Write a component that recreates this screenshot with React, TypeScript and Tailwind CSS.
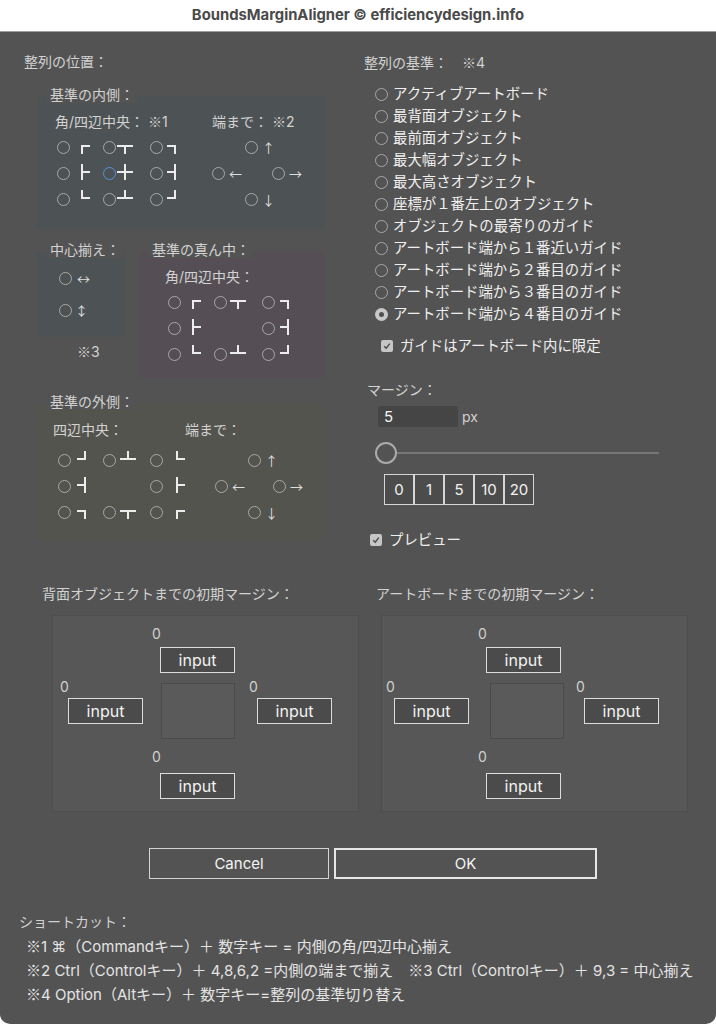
import React from "react";

function T({ s }: { s: string }) {
  const parts = s.split("※");
  return (
    <>
      {parts.map((p, i) => (
        <React.Fragment key={i}>
          {i > 0 && <span className="font-['Noto_Sans_CJK_JP',sans-serif]">※</span>}
          {p}
        </React.Fragment>
      ))}
    </>
  );
}

function Radio({ blue }: { blue?: boolean }) {
  return (
    <span
      className={
        blue
          ? "block w-[13px] h-[13px] shrink-0 rounded-full border-[1.5px] border-[#4f92db]"
          : "block w-[13px] h-[13px] shrink-0 rounded-full border-[1.5px] border-[#a8a8a8]"
      }
    />
  );
}

function RadioOn() {
  return (
    <span className="flex w-[13px] h-[13px] shrink-0 items-center justify-center rounded-full bg-[#c8c8c8]">
      <span className="block w-[5px] h-[5px] rounded-full bg-[#4f4f4f]" />
    </span>
  );
}

function Check() {
  return (
    <span className="flex w-[12px] h-[12px] shrink-0 items-center justify-center rounded-[2px] bg-[#c6c6c6]">
      <svg width="8" height="8" viewBox="0 0 8 8">
        <path d="M1.2 4.2 L3.2 6.2 L6.8 1.6" fill="none" stroke="#4a4a4a" strokeWidth="1.4" />
      </svg>
    </span>
  );
}

function G({ a, ml }: { a: string; ml: string }) {
  return (
    <svg width="16" height="16" viewBox="0 0 16 16" className={"shrink-0 mb-[3px] " + ml} fill="#ececec">
      {a.includes("l") && <rect x="0" y="7" width="9" height="2" />}
      {a.includes("r") && <rect x="7" y="7" width="9" height="2" />}
      {a.includes("u") && <rect x="7" y="0" width="2" height="9" />}
      {a.includes("d") && <rect x="7" y="7" width="2" height="9" />}
    </svg>
  );
}

function GCell({ a, ml, w, blue }: { a: string; ml: string; w: string; blue?: boolean }) {
  return (
    <div className={"flex items-center shrink-0 " + w}>
      <Radio blue={blue} />
      <G a={a} ml={ml} />
    </div>
  );
}

function Arrow({ ch, ml }: { ch: string; ml: string }) {
  return (
    <span className={"font-['Noto_Sans_CJK_JP',sans-serif] text-[13px] leading-none text-[#dedede] " + ml}>{ch}</span>
  );
}

function ACell({ ch, w }: { ch: string; w: string }) {
  return (
    <div className={"flex items-center shrink-0 " + w}>
      <Radio />
      <Arrow ch={ch} ml="ml-[4px]" />
    </div>
  );
}

function Empty({ w }: { w: string }) {
  return <div className={"shrink-0 " + w} />;
}

function Legend({ children }: { children: React.ReactNode }) {
  return (
    <div className="relative z-10 ml-[10px] w-fit px-[3px] bg-[#535353] text-[14px] leading-[16px] text-[#d2d2d2] whitespace-nowrap">
      {children}
    </div>
  );
}

const listItems = [
  "アクティブアートボード",
  "最背面オブジェクト",
  "最前面オブジェクト",
  "最大幅オブジェクト",
  "最大高さオブジェクト",
  "座標が１番左上のオブジェクト",
  "オブジェクトの最寄りのガイド",
  "アートボード端から１番近いガイド",
  "アートボード端から２番目のガイド",
  "アートボード端から３番目のガイド",
  "アートボード端から４番目のガイド",
];

function InputBox() {
  return (
    <div className="ml-[8px] flex w-[75px] h-[26px] items-center justify-center border-[1.5px] border-[#dcdcdc] bg-[#4b4b4b] text-[16px] leading-none text-[#f2f2f2]">
      input
    </div>
  );
}

function Zero() {
  return <div className="text-[14px] leading-[16px] text-[#d0d0d0]">0</div>;
}

function MarginPanel({ right }: { right?: boolean }) {
  return (
    <div className="w-[307px] h-[197px] mt-[11px] bg-[#575757] border border-[#4e4e4e] pt-[10px]">
      <div className={right ? "ml-[96px] flex flex-col" : "ml-[99px] flex flex-col"}>
        <Zero />
        <div className="mt-[5px]">
          <InputBox />
        </div>
      </div>
      <div className="mt-[6px] flex items-start">
        <div className={right ? "ml-[4px] flex flex-col" : "ml-[7px] flex flex-col"}>
          <Zero />
          <div className="mt-[3px]">
            <InputBox />
          </div>
        </div>
        <div className={right ? "ml-[21px] mt-[4px] w-[74px] h-[56px] bg-[#5a5a5a] border border-[#4a4a4a]" : "ml-[18px] mt-[4px] w-[74px] h-[56px] bg-[#5a5a5a] border border-[#4a4a4a]"} />
        <div className={right ? "ml-[12px] flex flex-col" : "ml-[14px] flex flex-col"}>
          <Zero />
          <div className="mt-[3px]">
            <InputBox />
          </div>
        </div>
      </div>
      <div className={right ? "ml-[96px] mt-[10px] flex flex-col" : "ml-[99px] mt-[10px] flex flex-col"}>
        <Zero />
        <div className="mt-[8px]">
          <InputBox />
        </div>
      </div>
    </div>
  );
}

export default function App() {
  return (
    <div className="w-[716px] h-[1024px] bg-white font-['Inter','Noto_Sans_CJK_JP',sans-serif] overflow-hidden">
      {/* title bar */}
      <div className="h-[32px] flex items-center justify-center border-b border-[#9c9c9c] bg-white">
        <span className="text-[14.8px] font-bold text-[#4a4a4a]">
          BoundsMarginAligner © efficiencydesign.info
        </span>
      </div>

      {/* body */}
      <div className="h-[992px] bg-[#535353] rounded-b-[10px]">
        {/* top section */}
        <div className="h-[520px] flex">
          {/* left column */}
          <div className="w-[340px] pl-[24px] pt-[20px]">
            <div className="text-[14px] leading-[20px] text-[#d2d2d2]">整列の位置：</div>

            {/* inner panel */}
            <div className="ml-[13px] w-[288px] mt-[15px]">
              <Legend>基準の内側：</Legend>
              <div className="-mt-[7px] h-[133px] bg-[#4d5354] pt-[17px]">
                <div className="flex text-[14px] leading-[16px] text-[#d2d2d2] whitespace-nowrap">
                  <span className="ml-[18px] w-[157px]"><T s="角/四辺中央： ※1" /></span>
                  <span><T s="端まで： ※2" /></span>
                </div>
                <div className="mt-[4px] pl-[20px]">
                  <div className="flex h-[26px] items-center">
                    <GCell a="rd" ml="ml-[4px]" w="w-[46px]" />
                    <GCell a="lrd" ml="ml-[1px]" w="w-[47px]" />
                    <GCell a="ld" ml="ml-[4px]" w="w-[62px]" />
                    <Empty w="w-[33px]" />
                    <ACell ch="↑" w="w-[27px]" />
                  </div>
                  <div className="flex h-[26px] items-center">
                    <GCell a="udr" ml="ml-[4px]" w="w-[46px]" />
                    <GCell a="udlr" ml="ml-[1px]" w="w-[47px]" blue />
                    <GCell a="udl" ml="ml-[4px]" w="w-[62px]" />
                    <ACell ch="←" w="w-[33px]" />
                    <Empty w="w-[27px]" />
                    <ACell ch="→" w="w-[30px]" />
                  </div>
                  <div className="flex h-[26px] items-center">
                    <GCell a="ur" ml="ml-[4px]" w="w-[46px]" />
                    <GCell a="lru" ml="ml-[1px]" w="w-[47px]" />
                    <GCell a="ul" ml="ml-[4px]" w="w-[62px]" />
                    <Empty w="w-[33px]" />
                    <ACell ch="↓" w="w-[27px]" />
                  </div>
                </div>
              </div>
            </div>

            {/* center + middle */}
            <div className="ml-[13px] mt-[13px] flex items-start">
              <div className="w-[88px]">
                <Legend>中心揃え：</Legend>
                <div className="-mt-[6px] h-[85px] bg-[#4d5354] pt-[13px] pl-[22px] flex flex-col gap-[6px]">
                  <div className="flex h-[26px] items-center">
                    <Radio />
                    <Arrow ch="↔" ml="ml-[5px]" />
                  </div>
                  <div className="flex h-[26px] items-center">
                    <Radio />
                    <Arrow ch="↕" ml="ml-[3px]" />
                  </div>
                </div>
                <div className="mt-[6px] ml-[40px] text-[14px] leading-[16px] text-[#d2d2d2]"><T s="※3" /></div>
              </div>
              <div className="ml-[14px] w-[186px]">
                <Legend>基準の真ん中：</Legend>
                <div className="-mt-[6px] h-[126px] bg-[#554f55] pt-[17px]">
                  <div className="ml-[26px] text-[14px] leading-[16px] text-[#d2d2d2]">角/四辺中央：</div>
                  <div className="mt-[4px] pl-[29px]">
                    <div className="flex h-[26px] items-center">
                      <GCell a="rd" ml="ml-[4px]" w="w-[46px]" />
                      <GCell a="lrd" ml="ml-[3px]" w="w-[48px]" />
                      <GCell a="ld" ml="ml-[5px]" w="w-[40px]" />
                    </div>
                    <div className="flex h-[26px] items-center">
                      <GCell a="udr" ml="ml-[4px]" w="w-[46px]" />
                      <Empty w="w-[48px]" />
                      <GCell a="udl" ml="ml-[5px]" w="w-[40px]" />
                    </div>
                    <div className="flex h-[26px] items-center">
                      <GCell a="ur" ml="ml-[4px]" w="w-[46px]" />
                      <GCell a="lru" ml="ml-[3px]" w="w-[48px]" />
                      <GCell a="ul" ml="ml-[5px]" w="w-[40px]" />
                    </div>
                  </div>
                </div>
              </div>
            </div>

            {/* outer panel */}
            <div className="ml-[13px] w-[286px] mt-[16px]">
              <Legend>基準の外側：</Legend>
              <div className="-mt-[7px] h-[137px] bg-[#54544e] pt-[19px]">
                <div className="flex text-[14px] leading-[16px] text-[#d2d2d2] whitespace-nowrap">
                  <span className="ml-[16px] w-[132px]">四辺中央：</span>
                  <span>端まで：</span>
                </div>
                <div className="mt-[9px] pl-[21px]">
                  <div className="flex h-[26px] items-center">
                    <GCell a="ul" ml="ml-[6px]" w="w-[45px]" />
                    <GCell a="lru" ml="ml-[4px]" w="w-[47px]" />
                    <GCell a="ur" ml="ml-[6px]" w="w-[65px]" />
                    <Empty w="w-[33px]" />
                    <ACell ch="↑" w="w-[25px]" />
                  </div>
                  <div className="flex h-[26px] items-center">
                    <GCell a="udl" ml="ml-[6px]" w="w-[45px]" />
                    <Empty w="w-[47px]" />
                    <GCell a="udr" ml="ml-[6px]" w="w-[65px]" />
                    <ACell ch="←" w="w-[33px]" />
                    <Empty w="w-[25px]" />
                    <ACell ch="→" w="w-[30px]" />
                  </div>
                  <div className="flex h-[26px] items-center">
                    <GCell a="ld" ml="ml-[6px]" w="w-[45px]" />
                    <GCell a="lrd" ml="ml-[4px]" w="w-[47px]" />
                    <GCell a="rd" ml="ml-[6px]" w="w-[65px]" />
                    <Empty w="w-[33px]" />
                    <ACell ch="↓" w="w-[25px]" />
                  </div>
                </div>
              </div>
            </div>
          </div>

          {/* right column */}
          <div className="pl-[24px] pt-[20px] flex-1">
            <div className="text-[14px] leading-[20px] text-[#d2d2d2] whitespace-nowrap"><T s="整列の基準：　※4" /></div>
            <div className="mt-[10px] pl-[11px]">
              {listItems.map((t, i) => (
                <div key={i} className="flex h-[22px] items-center">
                  {i === listItems.length - 1 ? <RadioOn /> : <Radio />}
                  <span className="ml-[5px] text-[14.4px] leading-none text-[#efefef] whitespace-nowrap">{t}</span>
                </div>
              ))}
            </div>
            <div className="mt-[10px] ml-[17px] flex h-[22px] items-center">
              <Check />
              <span className="ml-[7px] text-[14.4px] leading-none text-[#efefef] whitespace-nowrap">ガイドはアートボード内に限定</span>
            </div>
            <div className="mt-[23px] ml-[3px] text-[14px] leading-[20px] text-[#d2d2d2]">マージン：</div>
            <div className="mt-[6px] ml-[14px] flex items-center">
              <div className="w-[80px] h-[21px] rounded-[2px] bg-[#454545] pl-[6px] flex items-center text-[15px] leading-none text-[#f4f4f4]">
                5
              </div>
              <span className="ml-[4px] text-[14px] leading-none text-[#d2d2d2]">px</span>
            </div>
            <div className="mt-[15px] ml-[11px] flex items-center">
              <div className="w-[22px] h-[22px] rounded-full border-[2.5px] border-[#ababab] bg-[#535353] shrink-0" />
              <div className="w-[262px] h-[2px] bg-[#767676]" />
            </div>
            <div className="mt-[10px] ml-[20px] flex">
              {["0", "1", "5", "10", "20"].map((n) => (
                <div
                  key={n}
                  className="flex w-[30px] h-[31px] items-center justify-center border border-[#d6d6d6] bg-[#4c4c4c] text-[15px] leading-none text-[#f2f2f2]"
                >
                  {n}
                </div>
              ))}
            </div>
            <div className="mt-[24px] ml-[6px] flex h-[22px] items-center">
              <Check />
              <span className="ml-[7px] text-[14.4px] leading-none text-[#efefef]">プレビュー</span>
            </div>
          </div>
        </div>

        {/* margin panels */}
        <div className="mt-[32px] pl-[42px] flex">
          <div className="w-[334px]">
            <div className="text-[14px] leading-[20px] text-[#d2d2d2] whitespace-nowrap">背面オブジェクトまでの初期マージン：</div>
            <div className="ml-[10px]">
              <MarginPanel />
            </div>
          </div>
          <div className="w-[320px]">
            <div className="text-[14px] leading-[20px] text-[#d2d2d2] whitespace-nowrap">アートボードまでの初期マージン：</div>
            <div className="ml-[5px]">
              <MarginPanel right />
            </div>
          </div>
        </div>

        {/* buttons */}
        <div className="mt-[36px] pl-[149px] flex gap-[5px]">
          <div className="flex w-[180px] h-[31px] items-center justify-center border border-[#d4d4d4] text-[15px] leading-none text-[#f4f4f4]">
            Cancel
          </div>
          <div className="flex w-[263px] h-[31px] items-center justify-center border-2 border-[#e6e6e6] text-[15px] leading-none text-[#f4f4f4]">
            OK
          </div>
        </div>

        {/* shortcuts */}
        <div className="mt-[33px] pl-[19px]">
          <div className="text-[14px] leading-[20px] text-[#d2d2d2]">ショートカット：</div>
          <div className="mt-[2px] pl-[7px] text-[15px] leading-[23px] text-[#e4e4e4] whitespace-nowrap">
            <div><T s="※1 ⌘（Commandキー）＋ 数字キー = 内側の角/四辺中心揃え" /></div>
            <div><T s="※2 Ctrl（Controlキー）＋ 4,8,6,2 =内側の端まで揃え　※3 Ctrl（Controlキー）＋ 9,3 = 中心揃え" /></div>
            <div><T s="※4 Option（Altキー）＋  数字キー=整列の基準切り替え" /></div>
          </div>
        </div>
      </div>
    </div>
  );
}
